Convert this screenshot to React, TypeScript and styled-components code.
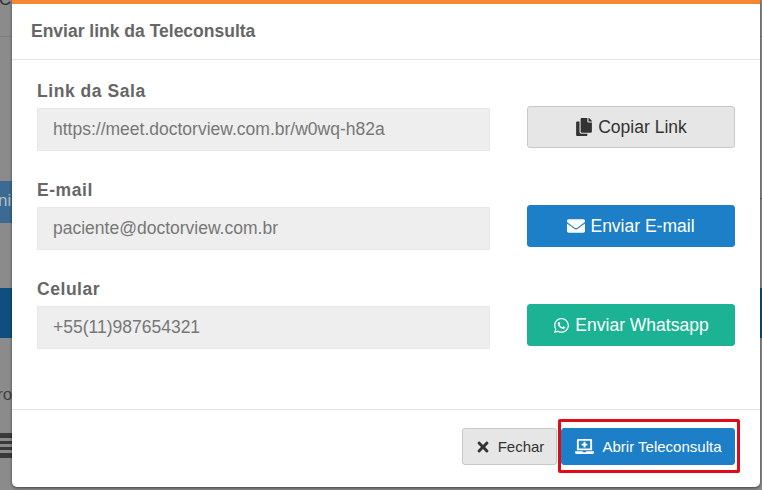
import React from "react";
import styled, { createGlobalStyle } from "styled-components";
import { FaCopy, FaEnvelope, FaWhatsapp, FaTimes, FaLaptopMedical } from "react-icons/fa";

const Global = createGlobalStyle`
  html, body { margin: 0; padding: 0; overflow: hidden; }
  body { font-family: "Liberation Sans", Arial, sans-serif; }
`;

const Page = styled.div`
  position: relative;
  width: 762px;
  height: 490px;
  overflow: hidden;
  background: #8b8b8b;
`;

const Band = styled.div<{ $top: number; $height: number; $color: string; $width?: number }>`
  position: absolute;
  left: 0;
  top: ${(p) => p.$top}px;
  width: ${(p) => (p.$width ? `${p.$width}px` : "100%")};
  height: ${(p) => p.$height}px;
  background: ${(p) => p.$color};
`;

const BackText = styled.span<{ $top: number; $left: number; $color: string }>`
  position: absolute;
  left: ${(p) => p.$left}px;
  top: ${(p) => p.$top}px;
  font-size: 17px;
  line-height: 18px;
  color: ${(p) => p.$color};
  white-space: nowrap;
`;

const Modal = styled.div`
  position: absolute;
  left: 12px;
  top: 0;
  width: 748px;
  height: 487px;
  box-sizing: border-box;
  display: flex;
  flex-direction: column;
  background: #fff;
  border-top: 4px solid #f58632;
  border-radius: 0 0 5px 5px;
  box-shadow: 0 1px 3px rgba(0, 0, 0, 0.55);
`;

const Header = styled.div`
  height: 56px;
  box-sizing: border-box;
  display: flex;
  align-items: center;
  padding: 0 19px 1px;
  border-bottom: 1px solid #e5e5e5;
`;

const Title = styled.h4`
  margin: 0;
  font-size: 17.5px;
  font-weight: 700;
  color: #666;
`;

const Body = styled.div`
  flex: 1;
  padding: 21px 25px 0;
  display: flex;
  flex-direction: column;
  gap: 17px;
`;

const Row = styled.div`
  display: grid;
  grid-template-columns: 453px 208px;
  column-gap: 37px;
  height: 82px;
`;

const Field = styled.div`
  display: flex;
  flex-direction: column;
`;

const Label = styled.label`
  height: 27px;
  line-height: 20px;
  font-size: 17.5px;
  font-weight: 700;
  letter-spacing: 0.55px;
  color: #666;
`;

const Input = styled.div`
  height: 43px;
  box-sizing: border-box;
  display: flex;
  align-items: center;
  padding: 0 15px;
  background: #eee;
  border: 1px solid #e8e8e8;
  font-size: 17.5px;
  color: #777;
`;

const tones = {
  gray: "background:#e6e6e6;border:1px solid #c8c8c8;color:#333;",
  blue: "background:#1d7fc7;border:1px solid #1d7fc7;color:#fff;",
  green: "background:#1cb394;border:1px solid #1cb394;color:#fff;",
};

const SideButton = styled.button<{ $tone: keyof typeof tones }>`
  align-self: start;
  margin-top: 25px;
  width: 208px;
  height: 42px;
  display: flex;
  align-items: center;
  justify-content: center;
  gap: 5px;
  padding: 0;
  border-radius: 3px;
  font-family: inherit;
  font-size: 17.5px;
  ${(p) => tones[p.$tone]}
`;

const Footer = styled.div`
  height: 78px;
  box-sizing: border-box;
  display: flex;
  justify-content: flex-end;
  align-items: flex-start;
  gap: 4px;
  padding: 18px 25px 0 0;
  border-top: 1px solid #e5e5e5;
`;

const FooterButton = styled.button<{ $tone: "gray" | "blue"; $width: number; $gap: number }>`
  position: relative;
  width: ${(p) => p.$width}px;
  height: 37px;
  display: flex;
  align-items: center;
  justify-content: center;
  gap: ${(p) => p.$gap}px;
  padding: 0;
  border-radius: 3px;
  font-family: inherit;
  font-size: 15px;
  ${(p) => tones[p.$tone]}
`;

const Highlight = styled.span`
  position: absolute;
  left: -4px;
  top: -10px;
  width: 182px;
  height: 54px;
  box-sizing: border-box;
  border: 3px solid #e00b14;
  border-radius: 2px;
  pointer-events: none;
`;

export default function App() {
  return (
    <Page>
      <Global />
      <Band $top={36} $height={1} $color="#7d7d7d" />
      <Band $top={181} $height={42} $color="#3d6a90" $width={12} />
      <Band $top={198} $height={1} $color="#666" />
      <Band $top={288} $height={50} $color="#0f4f7d" />
      <Band $top={433} $height={5} $color="#3a3a3a" $width={12} />
      <Band $top={441} $height={3} $color="#3a3a3a" $width={12} />
      <Band $top={447} $height={3} $color="#3a3a3a" $width={12} />
      <Band $top={453} $height={5} $color="#3a3a3a" $width={12} />
      <BackText $top={-9} $left={-1} $color="#2f2f2f">C</BackText>
      <BackText $top={192} $left={-2} $color="#a9c2d6">ni</BackText>
      <BackText $top={386} $left={-3} $color="#3f3f3f">ro</BackText>
      <Modal>
        <Header>
          <Title>Enviar link da Teleconsulta</Title>
        </Header>
        <Body>
          <Row>
            <Field>
              <Label>Link da Sala</Label>
              <Input>https://meet.doctorview.com.br/w0wq-h82a</Input>
            </Field>
            <SideButton $tone="gray">
              <FaCopy size={18} color="#333" />
              Copiar Link
            </SideButton>
          </Row>
          <Row>
            <Field>
              <Label>E-mail</Label>
              <Input>paciente@doctorview.com.br</Input>
            </Field>
            <SideButton $tone="blue">
              <FaEnvelope size={18} />
              Enviar E-mail
            </SideButton>
          </Row>
          <Row>
            <Field>
              <Label>Celular</Label>
              <Input>+55(11)987654321</Input>
            </Field>
            <SideButton $tone="green">
              <FaWhatsapp size={17} />
              Enviar Whatsapp
            </SideButton>
          </Row>
        </Body>
        <Footer>
          <FooterButton $tone="gray" $width={95} $gap={7}>
            <FaTimes size={16} color="#333" />
            Fechar
          </FooterButton>
          <FooterButton $tone="blue" $width={174} $gap={9}>
            <FaLaptopMedical size={19} />
            Abrir Teleconsulta
            <Highlight />
          </FooterButton>
        </Footer>
      </Modal>
    </Page>
  );
}
